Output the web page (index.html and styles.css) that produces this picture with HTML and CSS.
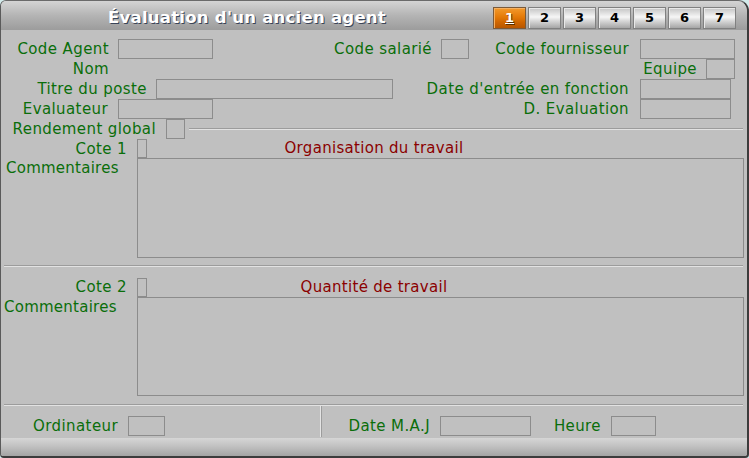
FILE: index.html
```html
<!DOCTYPE html>
<html lang="fr">
<head>
<meta charset="utf-8">
<title>Évaluation d'un ancien agent</title>
<link rel="stylesheet" href="styles.css">
</head>
<body>
<div class="window">
  <div class="titlebar">
    <div class="title">Évaluation d'un ancien agent</div>
    <div class="tabs">
      <div class="tab active"><span>1</span></div>
      <div class="tab">2</div>
      <div class="tab">3</div>
      <div class="tab">4</div>
      <div class="tab">5</div>
      <div class="tab">6</div>
      <div class="tab">7</div>
    </div>
  </div>
  <div class="content">
    <div class="head">
      <div class="row r1">
        <span class="lbl">Code Agent</span><span class="inp"></span>
        <span class="lbl">Code salarié</span><span class="inp"></span>
        <span class="lbl pr11">Code fournisseur</span><span class="inp"></span>
      </div>
      <div class="row r2">
        <span class="lbl">Nom</span>
        <span class="lbl">Equipe</span><span class="inp"></span>
      </div>
      <div class="row r3">
        <span class="lbl">Titre du poste</span><span class="inp"></span>
        <span class="lbl pr11">Date d'entrée en fonction</span><span class="inp"></span>
      </div>
      <div class="row r4">
        <span class="lbl pr10">Evaluateur</span><span class="inp"></span>
        <span class="lbl pr11">D. Evaluation</span><span class="inp"></span>
      </div>
      <div class="row r5">
        <span class="lbl pr10">Rendement global</span><span class="inp"></span>
        <span class="groove"></span>
      </div>
    </div>

    <div class="section s1">
      <div class="cote-row">
        <span class="lbl pr10">Cote 1</span><span class="inp cote"></span>
        <span class="topic">Organisation du travail</span>
      </div>
      <div class="comment-row">
        <span class="clbl">Commentaires</span>
        <div class="memo tall"></div>
      </div>
    </div>

    <div class="sep"></div>

    <div class="section s2">
      <div class="cote-row">
        <span class="lbl pr10">Cote 2</span><span class="inp cote"></span>
        <span class="topic">Quantité de travail</span>
      </div>
      <div class="comment-row">
        <span class="clbl c2">Commentaires</span>
        <div class="memo"></div>
      </div>
    </div>

    <div class="sep sep2"></div>

    <div class="footer">
      <span class="lbl pr10">Ordinateur</span><span class="inp"></span>
      <span class="spacer"></span>
      <span class="vsep"></span>
      <span class="lbl pr10">Date M.A.J</span><span class="inp"></span>
      <span class="lbl pr10">Heure</span><span class="inp"></span>
    </div>
  </div>
  <div class="bottombar"></div>
</div>
</body>
</html>
```

FILE: styles.css
```css
html, body {
  margin: 0;
  padding: 0;
  background: #d3ebeb;
}

.window {
  width: 749px;
  height: 458px;
  box-sizing: border-box;
  border-top: 1px solid #6a6a6a;
  border-left: 1px solid #5a5a5a;
  border-right: 2px solid #3c3c3c;
  border-bottom: 2px solid #3c3c3c;
  border-radius: 6px 11px 4px 4px;
  overflow: hidden;
  background: #c0c0c0;
  display: flex;
  flex-direction: column;
  font-family: "DejaVu Sans", Verdana, sans-serif;
  font-size: 15px;
}

/* Title bar */
.titlebar {
  height: 29px;
  flex: none;
  display: flex;
  align-items: flex-start;
  background: linear-gradient(#d4d4d4, #b4b4b4 50%, #9c9c9c);
}

.title {
  flex: 1;
  text-align: center;
  color: #ffffff;
  font-weight: bold;
  font-size: 16.5px;
  line-height: 20px;
  padding-top: 7px;
  text-shadow: 1px 1px 0 #3a4458;
  letter-spacing: 0.25px;
}

.tabs {
  display: flex;
  gap: 2px;
  margin-top: 6px;
  margin-right: 11px;
}

.tab {
  width: 33px;
  height: 22px;
  box-sizing: border-box;
  border: 1px solid #808080;
  box-shadow: inset 1px 1px 0 #e8e8e8;
  background: linear-gradient(#c4c4c4, #f6f6f6 45%, #dedede 60%, #a6a6a6);
  font-family: "DejaVu Sans", Verdana, sans-serif;
  font-weight: bold;
  font-size: 13px;
  line-height: 20px;
  text-align: center;
  color: #000;
}

.tab.active {
  background: linear-gradient(#f39a2c, #e47a08 45%, #d06600 70%, #b85600);
  border-color: #7a5a3a;
  box-shadow: inset 1px 1px 0 #f6b060;
  color: #fff;
}

.tab.active span {
  text-decoration: underline;
  text-shadow: 1px 1px 0 #5a3000;
}

/* Content */
.content {
  flex: 1;
  padding-top: 9px;
  display: flex;
  flex-direction: column;
}

.lbl {
  color: #0a6e0a;
  text-align: right;
  white-space: nowrap;
  padding-right: 9px;
  box-sizing: border-box;
  line-height: 18px;
  letter-spacing: 0.4px;
}

.pr10 { padding-right: 10px; }
.pr11 { padding-right: 11px; }

.inp {
  display: block;
  box-sizing: border-box;
  height: 20px;
  border: 1px solid #8c8c8c;
  background: #c0c0c0;
}

.row {
  display: grid;
  height: 20px;
  align-items: center;
}

.r1 { grid-template-columns: 117px 95px 228px 28px 171px 95px; }
.r2 { grid-template-columns: 117px 588px 29px; }
.r3 { grid-template-columns: 155px 237px 247px 91px; }
.r4 { grid-template-columns: 117px 95px 427px 91px; }
.r5 {
  grid-template-columns: 165px 19px 1fr;
  margin-right: 4px;
}

.groove {
  margin-left: 4px;
  height: 2px;
  border-top: 1px solid #9c9c9c;
  border-bottom: 1px solid #e2e2e2;
  box-sizing: border-box;
}

/* Sections */
.section {
  display: flex;
  flex-direction: column;
}

.cote-row {
  display: grid;
  grid-template-columns: 136px 10px 454px;
  height: 19px;
  align-items: center;
}

.inp.cote {
  height: 19px;
}

.topic {
  color: #8b0000;
  text-align: center;
  line-height: 18px;
  letter-spacing: 0.3px;
  margin-top: -1px;
}

.comment-row {
  display: flex;
  align-items: flex-start;
}

.clbl {
  width: 136px;
  flex: none;
  color: #0a6e0a;
  padding-left: 5px;
  box-sizing: border-box;
  line-height: 18px;
  padding-top: 1px;
  letter-spacing: 0.25px;
}

.clbl.c2 {
  padding-left: 3px;
}

.memo {
  width: 607px;
  height: 99px;
  box-sizing: border-box;
  border: 1px solid #8c8c8c;
}

.memo.tall {
  height: 100px;
}

.sep {
  margin: 7px 4px 0 3px;
  height: 2px;
  box-sizing: border-box;
  border-top: 1px solid #9c9c9c;
  border-bottom: 1px solid #e2e2e2;
}

.s2 {
  margin-top: 11px;
}

.s2 .lbl {
  margin-top: -1px;
}

.sep2 {
  margin-top: 8px;
}

/* Footer */
.footer {
  display: grid;
  grid-template-columns: 127px 37px 155px 2px 118px 91px 80px 45px;
  height: 31px;
  align-items: center;
}

.footer .inp {
  align-self: start;
  margin-top: 10px;
}

.footer .lbl {
  align-self: start;
  margin-top: 11px;
}

.vsep {
  align-self: stretch;
  border-left: 1px solid #e4e4e4;
  border-right: 1px solid #9c9c9c;
  box-sizing: border-box;
}

.bottombar {
  flex: none;
  height: 18px;
  background: linear-gradient(#d6d6d6, #c4c4c4 40%, #a4a4a4);
}
```
